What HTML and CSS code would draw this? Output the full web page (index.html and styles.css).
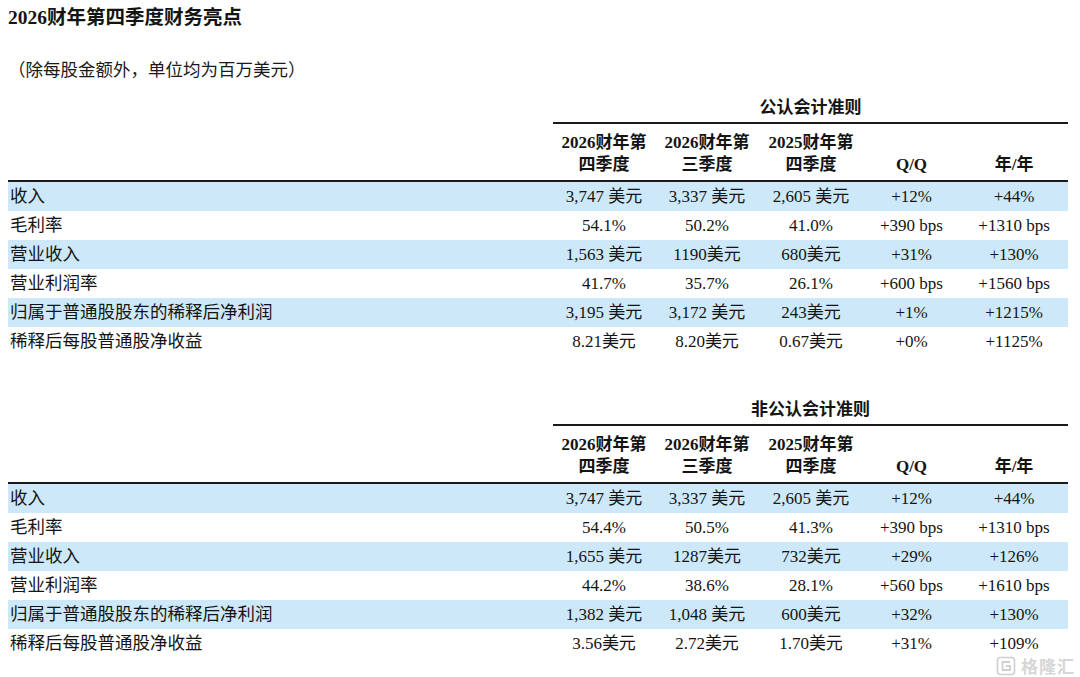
FILE: index.html
```html
<!DOCTYPE html>
<html lang="zh-CN">
<head>
<meta charset="utf-8">
<title>2026财年第四季度财务亮点</title>
<link rel="stylesheet" href="styles.css">
</head>
<body>
<div class="page">
  <h1 class="title">2026财年第四季度财务亮点</h1>
  <p class="note">（除每股金额外，单位均为百万美元）</p>

  <table class="fin">
    <colgroup>
      <col class="c-label"><col class="c1"><col class="c2"><col class="c3"><col class="c4"><col class="c5">
    </colgroup>
    <thead>
      <tr class="group-row"><th class="blank"></th><th class="group" colspan="5">公认会计准则</th></tr>
      <tr class="head-row">
        <th class="lab"></th>
        <th>2026财年第<br>四季度</th>
        <th>2026财年第<br>三季度</th>
        <th>2025财年第<br>四季度</th>
        <th>Q/Q</th>
        <th>年/年</th>
      </tr>
    </thead>
    <tbody>
      <tr class="shade"><td class="lab">收入</td><td>3,747 美元</td><td>3,337 美元</td><td>2,605 美元</td><td>+12%</td><td>+44%</td></tr>
      <tr><td class="lab">毛利率</td><td>54.1%</td><td>50.2%</td><td>41.0%</td><td>+390 bps</td><td>+1310 bps</td></tr>
      <tr class="shade"><td class="lab">营业收入</td><td>1,563 美元</td><td>1190美元</td><td>680美元</td><td>+31%</td><td>+130%</td></tr>
      <tr><td class="lab">营业利润率</td><td>41.7%</td><td>35.7%</td><td>26.1%</td><td>+600 bps</td><td>+1560 bps</td></tr>
      <tr class="shade"><td class="lab">归属于普通股股东的稀释后净利润</td><td>3,195 美元</td><td>3,172 美元</td><td>243美元</td><td>+1%</td><td>+1215%</td></tr>
      <tr><td class="lab">稀释后每股普通股净收益</td><td>8.21美元</td><td>8.20美元</td><td>0.67美元</td><td>+0%</td><td>+1125%</td></tr>
    </tbody>
  </table>

  <table class="fin second">
    <colgroup>
      <col class="c-label"><col class="c1"><col class="c2"><col class="c3"><col class="c4"><col class="c5">
    </colgroup>
    <thead>
      <tr class="group-row"><th class="blank"></th><th class="group" colspan="5">非公认会计准则</th></tr>
      <tr class="head-row">
        <th class="lab"></th>
        <th>2026财年第<br>四季度</th>
        <th>2026财年第<br>三季度</th>
        <th>2025财年第<br>四季度</th>
        <th>Q/Q</th>
        <th>年/年</th>
      </tr>
    </thead>
    <tbody>
      <tr class="shade"><td class="lab">收入</td><td>3,747 美元</td><td>3,337 美元</td><td>2,605 美元</td><td>+12%</td><td>+44%</td></tr>
      <tr><td class="lab">毛利率</td><td>54.4%</td><td>50.5%</td><td>41.3%</td><td>+390 bps</td><td>+1310 bps</td></tr>
      <tr class="shade"><td class="lab">营业收入</td><td>1,655 美元</td><td>1287美元</td><td>732美元</td><td>+29%</td><td>+126%</td></tr>
      <tr><td class="lab">营业利润率</td><td>44.2%</td><td>38.6%</td><td>28.1%</td><td>+560 bps</td><td>+1610 bps</td></tr>
      <tr class="shade"><td class="lab">归属于普通股股东的稀释后净利润</td><td>1,382 美元</td><td>1,048 美元</td><td>600美元</td><td>+32%</td><td>+130%</td></tr>
      <tr><td class="lab">稀释后每股普通股净收益</td><td>3.56美元</td><td>2.72美元</td><td>1.70美元</td><td>+31%</td><td>+109%</td></tr>
    </tbody>
  </table>

  <div class="watermark">
    <svg class="wm-icon" width="20" height="20" viewBox="0 0 20 20" aria-hidden="true">
      <rect x="1.5" y="1.5" width="17" height="17" rx="3" fill="none" stroke="#cfcfcf" stroke-width="1.6"/>
      <path d="M14 6 H6.5 V14 H14 V10 H10" fill="none" stroke="#cfcfcf" stroke-width="1.8"/>
    </svg>
    <span class="wm-text">格隆汇</span>
  </div>
</div>
</body>
</html>
```

FILE: styles.css
```css
html, body {
  margin: 0;
  padding: 0;
  background: #ffffff;
}

body {
  font-family: "Liberation Serif", "Noto Sans CJK SC", serif;
  color: #141414;
  width: 1080px;
  height: 677px;
  overflow: hidden;
}

.page {
  position: relative;
  width: 1080px;
  height: 677px;
  padding: 7px 12px 0 8px;
  box-sizing: border-box;
}

.title {
  margin: 0;
  font-size: 19.5px;
  line-height: 22px;
  font-weight: bold;
}

.note {
  margin: 29px 0 0 0;
  font-size: 17.5px;
  line-height: 24px;
  font-weight: normal;
  color: #1a1a1a;
}

.fin {
  width: 1060px;
  border-collapse: separate;
  border-spacing: 0;
  table-layout: fixed;
  margin-top: 12px;
  font-size: 17px;
}

.fin.second {
  margin-top: 40px;
}

.c-label { width: 545px; }
.c1 { width: 102px; }
.c2 { width: 104px; }
.c3 { width: 104px; }
.c4 { width: 97px; }
.c5 { width: 108px; }

.fin th, .fin td {
  padding: 0;
  text-align: center;
  white-space: nowrap;
}

.group-row th {
  height: 28px;
}

.group {
  font-weight: bold;
  line-height: 26px;
  padding-bottom: 2px;
  vertical-align: middle;
  border-bottom: 2px solid #1a1a1a;
}

.head-row th {
  font-weight: bold;
  line-height: 22px;
  padding: 8px 0 4px 0;
  vertical-align: bottom;
  border-bottom: 2px solid #1a1a1a;
}

.fin td {
  height: 29px;
  line-height: 29px;
  vertical-align: middle;
}

.fin td.lab {
  text-align: left;
  padding-left: 2px;
  font-size: 17.5px;
}

.shade td {
  background: #cde9f9;
}

.watermark {
  position: absolute;
  right: 5px;
  bottom: 1px;
  display: flex;
  align-items: center;
  gap: 5px;
}

.wm-text {
  font-family: "Noto Sans CJK SC", sans-serif;
  font-size: 17px;
  line-height: 20px;
  font-weight: bold;
  color: #d6d6d6;
  letter-spacing: 1px;
}
```
